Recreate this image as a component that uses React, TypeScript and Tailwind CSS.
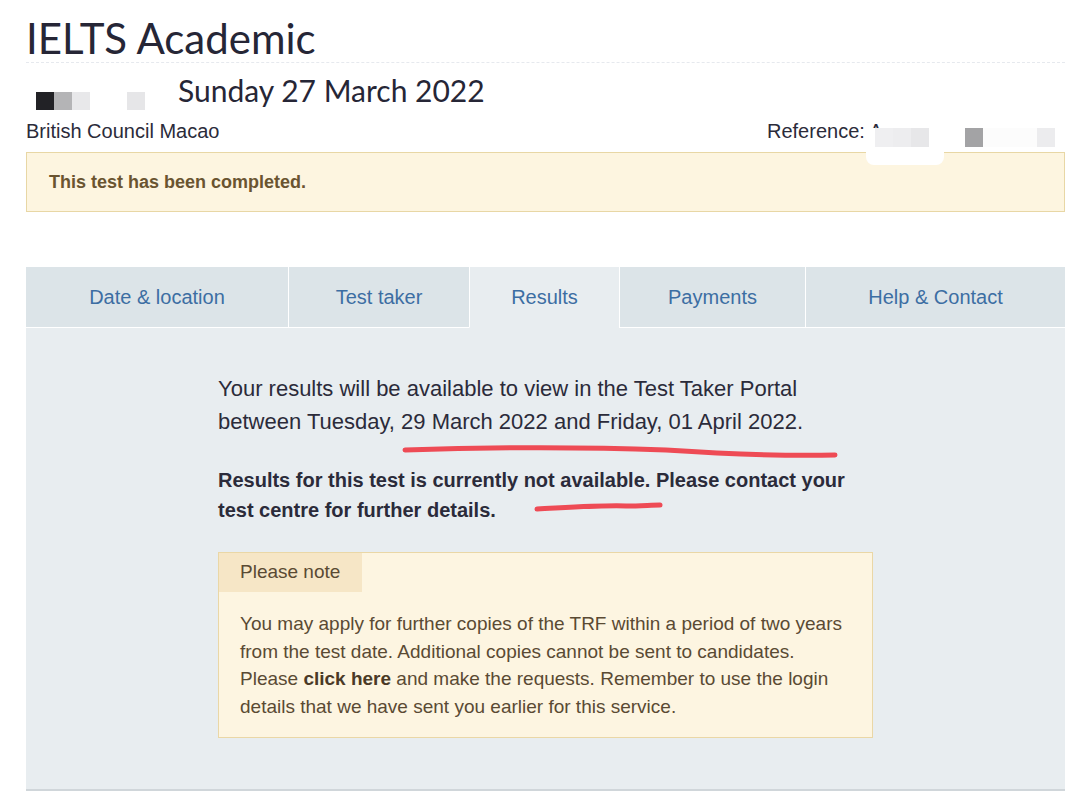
import React from 'react';

const tabs = [
  { label: 'Date & location', w: 'w-[262px]' },
  { label: 'Test taker', w: 'w-[181px]' },
  { label: 'Results', w: 'w-[150px]', active: true },
  { label: 'Payments', w: 'w-[186px]' },
  { label: 'Help & Contact', w: 'flex-1' },
];

function Pixels({ cells }: { cells: string[] }) {
  return (
    <div className="flex">
      {cells.map((c, i) => (
        <div key={i} className="w-[18px] h-[18px]" style={{ backgroundColor: c }} />
      ))}
    </div>
  );
}

function Tabs() {
  return (
    <div className="flex h-[61px]">
      {tabs.map((t, i) => (
        <div
          key={t.label}
          className={`${t.w} flex items-center justify-center text-[20px] text-[#3c6ea3] border-b ${
            t.active ? 'bg-[#e8edf0] border-[#e8edf0]' : 'bg-[#dce4e8] border-white'
          } ${i > 0 ? 'border-l border-l-white' : ''}`}
        >
          {t.label}
        </div>
      ))}
    </div>
  );
}

function NoteBox() {
  return (
    <div className="border border-[#ead7a6] bg-[#fdf5e1] text-[#5a4a33]">
      <div className="w-[143px] h-[39px] bg-[#f6e6c6] flex items-center pl-[21px] text-[19px]">Please note</div>
      <p className="px-[21px] pt-[18px] pb-[17px] text-[19px] leading-[27.5px] whitespace-nowrap">
        You may apply for further copies of the TRF within a period of two years
        <br />
        from the test date. Additional copies cannot be sent to candidates.
        <br />
        Please <b className="text-[#4a3a26]">click here</b> and make the requests. Remember to use the login
        <br />
        details that we have sent you earlier for this service.
      </p>
    </div>
  );
}

export default function App() {
  return (
    <div className="relative w-[1080px] h-[805px] bg-white overflow-hidden font-['Liberation_Sans',Arial,sans-serif] text-[#2b2b3a]">
      <div className="pl-[26px] pr-[15px]">
        <h1 className="pt-[14px] h-[62px] text-[42px] leading-[48px] font-['Lato',sans-serif] text-[#262636]">
          IELTS Academic
        </h1>
        <div className="border-t border-dashed border-[#e6e9ee]" />

        <div className="flex items-end h-[50px]">
          <div className="ml-[10px] mb-[3px] flex gap-[37px]">
            <Pixels cells={['#222226', '#b4b4b6', '#e8e8ea']} />
            <Pixels cells={['#e6e6e8']} />
          </div>
          <div className="ml-[33px] mb-[5px] text-[30px] leading-[36px] font-['Lato',sans-serif] text-[#262636]">
            Sunday 27 March 2022
          </div>
        </div>

        <div className="flex justify-between h-[36px] items-center text-[20px]">
          <span>British Council Macao</span>
          <span className="w-[298px]">Reference: A</span>
        </div>

        <div className="mt-[3px] h-[60px] border border-[#e8d7a5] bg-[#fdf5e0] flex items-center pl-[22px] text-[18px] font-bold text-[#6a5430]">
          This test has been completed.
        </div>

        <div className="mt-[55px]">
          <Tabs />
          <div className="relative bg-[#e8edf0] h-[463px] border-b-2 border-[#d0d6da] pl-[192px] pt-[44px]">
            <div className="w-[655px]">
              <p className="text-[22px] leading-[33px]">
                Your results will be available to view in the Test Taker Portal between Tuesday, 29 March 2022 and
                Friday, 01 April 2022.
              </p>
              <p className="mt-[27px] text-[20px] leading-[30px] font-bold">
                Results for this test is currently not available. Please contact your test centre for further
                details.
              </p>
              <div className="mt-[27px]">
                <NoteBox />
              </div>
            </div>

            <svg className="absolute left-0 top-0 pointer-events-none" width="1039" height="463">
              <path
                d="M379 122 C 470 119, 560 119, 640 122 C 700 126, 760 128, 809 127"
                stroke="#ee4b55"
                strokeWidth="5"
                fill="none"
                strokeLinecap="round"
              />
              <path
                d="M511 181 C 550 179, 580 177, 600 178 C 615 178, 625 177, 634 177"
                stroke="#ee4b55"
                strokeWidth="5"
                fill="none"
                strokeLinecap="round"
              />
            </svg>
          </div>
        </div>
      </div>

      {/* blurred reference number */}
      <div className="absolute left-[866px] top-[128px] flex items-start">
        <div className="bg-white w-[78px] h-[37px] rounded-b-lg flex pl-[9px]">
          <div className="w-[18px] h-[19px] bg-[#efeff1]" />
          <div className="w-[18px] h-[19px] bg-[#ededef]" />
          <div className="w-[18px] h-[19px] bg-[#e7e7e9]" />
        </div>
        <div className="w-[21px]" />
        <div className="w-[18px] h-[19px] bg-[#a3a3a5]" />
        <div className="w-[54px] h-[19px] bg-[#fcfcfc]" />
        <div className="w-[18px] h-[19px] bg-[#ececee]" />
      </div>
    </div>
  );
}
